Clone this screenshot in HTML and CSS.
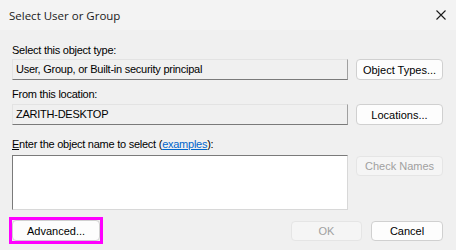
FILE: index.html
```html
<html>
    <head>
        <title>Select User or Group</title>
        <link rel="stylesheet" href="styles.css">
    </head>
    <body>
        <div id="dialog">
            <div class="titleBar">
                <span class="titleText">Select User or Group</span>
                <svg class="closeIcon" width="10" height="10" viewBox="0 0 10 10">
                    <path d="M0.5 0.5 L9.5 9.5 M9.5 0.5 L0.5 9.5" stroke="#1a1a1a" stroke-width="1.1" fill="none"/>
                </svg>
            </div>

            <div class="content">
                <div class="label first">Select this object type:</div>
                <div class="row">
                    <div class="field">User, Group, or Built-in security principal</div>
                    <button class="button">Object Types...</button>
                </div>

                <div class="label second">From this location:</div>
                <div class="row">
                    <div class="field">ZARITH-DESKTOP</div>
                    <button class="button">Locations...</button>
                </div>

                <div class="label third"><u>E</u>nter the object name to select (<a href="#">examples</a>):</div>
                <div class="row">
                    <textarea class="nameBox"></textarea>
                    <button class="button disabled">Check Names</button>
                </div>

                <div class="bottomRow">
                    <div class="highlight">
                        <button class="button advanced">Advanced...</button>
                    </div>
                    <div class="spacer"></div>
                    <button class="button disabled okButton">OK</button>
                    <button class="button cancelButton">Cancel</button>
                </div>
            </div>
        </div>
    </body>
</html>
```

FILE: styles.css
```css
body{
    margin: 0;
    background: #f0f0f0;
    font-family: "Liberation Sans", Arial, sans-serif;
    font-size: 11px;
    color: #000;
}

#dialog{
    width: 456px;
    height: 250px;
    overflow: hidden;
}

.titleBar{
    height: 30px;
    background: #f3f3f3;
    display: flex;
    align-items: center;
    padding: 0 10px 0 9px;
}

.titleText{
    flex: 1;
    font-family: "Open Sans", "Liberation Sans", sans-serif;
    font-size: 11.5px;
    color: #1a1a1a;
}

.closeIcon{
    margin-top: -1px;
}

.content{
    padding: 0 13px 0 12px;
}

.label{
    height: 14px;
    line-height: 14px;
    white-space: nowrap;
    letter-spacing: -0.25px;
}

.label.first{ margin-top: 13px; }
.label.second{ margin-top: 7px; }
.label.third{ margin-top: 12px; }

.label a{
    color: #0066cc;
}

.row{
    display: flex;
    margin-top: 2px;
    gap: 8px;
    align-items: flex-start;
}

.label.second + .row{ margin-top: 3px; }
.label.third + .row{ margin-top: 4px; }

.field{
    width: 336px;
    height: 21px;
    box-sizing: border-box;
    border-top: 1px solid #e3e3e3;
    border-left: 1px solid #e3e3e3;
    border-right: 1px solid #a0a0a0;
    border-bottom: 1px solid #7a7a7a;
    padding: 0 3px;
    line-height: 19px;
    white-space: nowrap;
    letter-spacing: -0.25px;
}

.nameBox{
    width: 336px;
    height: 55px;
    box-sizing: border-box;
    margin: 0;
    background: #fff;
    border-top: 1px solid #7a7a7a;
    border-left: 1px solid #7a7a7a;
    border-right: 1px solid #d8d8d8;
    border-bottom: 1px solid #d8d8d8;
    resize: none;
}

.button{
    width: 87px;
    height: 21px;
    box-sizing: border-box;
    background: #fdfdfd;
    border: 1px solid #d0d0d0;
    border-radius: 4px;
    font-family: "Liberation Sans", Arial, sans-serif;
    font-size: 11px;
    color: #000;
    padding: 0;
    margin: 0;
}

.nameBox + .button{
    margin-top: 1px;
    height: 20px;
}

.button.disabled{
    background: #f5f5f5;
    border-color: #e5e5e5;
    color: #a0a0a0;
}

.bottomRow{
    display: flex;
    align-items: center;
    margin-top: 7px;
    margin-left: -3px;
}

.highlight{
    border: 3px solid #ff00ff;
    width: 88px;
    height: 21px;
}

.advanced{
    width: 88px;
    height: 21px;
}

.spacer{
    flex: 1;
}

.okButton{
    width: 71px;
    height: 20px;
    margin-right: 9px;
}

.cancelButton{
    width: 72px;
    height: 20px;
}
```
